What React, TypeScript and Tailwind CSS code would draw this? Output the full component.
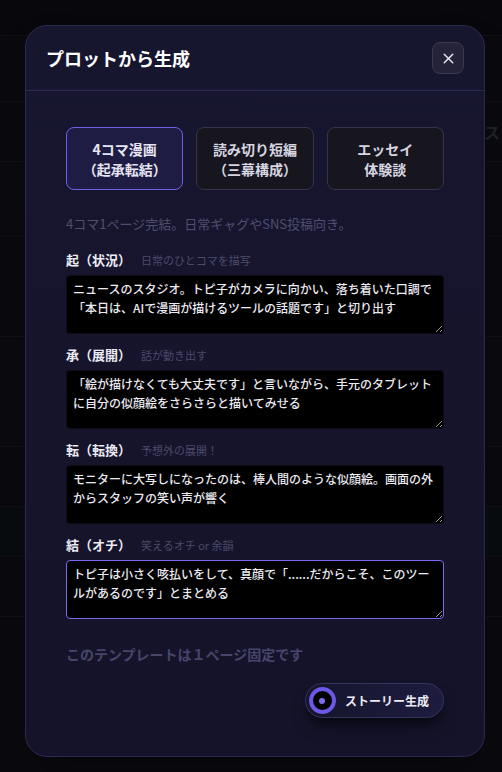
import { X } from "lucide-react";

const FONT = { fontFamily: '"Noto Sans CJK JP", "Noto Sans", sans-serif' };

const TEMPLATES = [
  { key: "4koma", lines: ["4コマ漫画", "（起承転結）"] },
  { key: "oneshot", lines: ["読み切り短編", "（三幕構成）"] },
  { key: "essay", lines: ["エッセイ", "体験談"] },
];

const BEATS = [
  {
    label: "起（状況）",
    hint: "日常のひとコマを描写",
    text: "ニュースのスタジオ。トピ子がカメラに向かい、落ち着いた口調で「本日は、AIで漫画が描けるツールの話題です」と切り出す",
  },
  {
    label: "承（展開）",
    hint: "話が動き出す",
    text: "「絵が描けなくても大丈夫です」と言いながら、手元のタブレットに自分の似顔絵をさらさらと描いてみせる",
  },
  {
    label: "転（転換）",
    hint: "予想外の展開！",
    text: "モニターに大写しになったのは、棒人間のような似顔絵。画面の外からスタッフの笑い声が響く",
  },
  {
    label: "結（オチ）",
    hint: "笑えるオチ or 余韻",
    text: "トピ子は小さく咳払いをして、真顔で「......だからこそ、このツールがあるのです」とまとめる",
  },
];

function Backdrop() {
  // dimmed app behind the modal
  return (
    <div className="flex h-full flex-col bg-[#0c0c12]">
      <div className="h-[36px] border-b border-[#15151d] bg-[#0a0a10]" />
      <div className="h-[66px] border-b border-[#13131b]" />
      <div className="flex h-[60px] items-center justify-end border-b border-[#13131b] pr-[2px]">
        <span className="text-[16px] font-bold text-[#2a2a33]">ス</span>
      </div>
      <div className="h-[75px] border-b border-[#13131b] bg-[#0d0d13]" />
      <div className="h-[100px] border-b border-[#13131b]" />
      <div className="h-[110px] border-b border-[#13131b] bg-[#0d0d13]" />
      <div className="h-[60px] border-b border-[#13131b]" />
      <div className="h-[50px] border-b border-[#13131b] bg-[#0c1012]" />
      <div className="h-[60px] border-b border-[#13131b]" />
      <div className="flex-1" />
    </div>
  );
}

function TemplateTab({ lines, active }: { lines: string[]; active: boolean }) {
  return (
    <button
      type="button"
      className={`flex h-[63px] flex-col items-center justify-center rounded-lg border text-[14px] font-bold leading-[20px] ${
        active
          ? "border-[#6f5fe6] bg-[#1e1c42] text-[#e6e4f4]"
          : "border-[#35344a] bg-[#17161f] text-[#d6d5e0]"
      }`}
    >
      {lines.map((l) => (
        <span key={l}>{l}</span>
      ))}
    </button>
  );
}

function Beat({ label, hint, text, focused }: { label: string; hint: string; text: string; focused?: boolean }) {
  return (
    <div className="flex flex-col">
      <div className="flex h-[18px] items-center gap-[10px]">
        <span className="text-[13px] font-bold text-[#ecebf5]">{label}</span>
        <span className="text-[11px] text-[#4b4a6a]">{hint}</span>
      </div>
      <textarea
        defaultValue={text}
        style={FONT}
        className={`mt-[6px] h-[59px] w-full rounded-[4px] border bg-black px-[6px] py-[3px] text-[12px] font-medium leading-[19px] text-[#ecebf3] outline-none ${
          focused ? "border-[#7a68f0]" : "border-[#0c0c14]"
        }`}
      />
    </div>
  );
}

export default function App() {
  return (
    <div className="relative h-[772px] w-full overflow-hidden" style={FONT}>
      <Backdrop />

      {/* modal */}
      <div className="absolute inset-0 bg-black/20 pl-[25px] pt-[25px]">
        <div className="flex h-[732px] w-[460px] flex-col overflow-hidden rounded-[22px] border border-[#2c2950] bg-gradient-to-b from-[#17162f] to-[#141329] shadow-2xl">
          <div className="flex h-[65px] items-center justify-between border-b border-[#2a2850] pl-[20px] pr-[20px]">
            <h2 className="text-[18px] font-bold text-white">プロットから生成</h2>
            <button
              type="button"
              className="flex h-[32px] w-[32px] items-center justify-center rounded-lg border border-[#3a3955] bg-[#24233a] text-[#e8e8f0]"
            >
              <X size={17} strokeWidth={2} />
            </button>
          </div>

          <div className="flex flex-1 flex-col px-[40px] pt-[36px]">
            <div className="grid grid-cols-3 gap-[13px]">
              {TEMPLATES.map((t, i) => (
                <TemplateTab key={t.key} lines={t.lines} active={i === 0} />
              ))}
            </div>

            <p className="mt-[23px] text-[13px] leading-[22px] text-[#4f4e70]">
              4コマ1ページ完結。日常ギャグやSNS投稿向き。
            </p>

            <div className="mt-[16px] flex flex-col gap-[12px]">
              {BEATS.map((b, i) => (
                <Beat key={b.label} {...b} focused={i === 3} />
              ))}
            </div>

            <p className="mt-[25px] text-[14px] font-bold text-[#47466a]">このテンプレートは１ページ固定です</p>

            <div className="mt-[18px] flex justify-end">
              <button
                type="button"
                className="flex h-[35px] items-center gap-[9px] rounded-full border border-[#34335a] bg-gradient-to-r from-[#16152c] to-[#1d1c40] pl-[3px] pr-[14px] shadow-lg shadow-black/50"
              >
                <span className="flex h-[27px] w-[27px] items-center justify-center rounded-full border-[4px] border-[#6a58e6] bg-black">
                  <span className="h-[6px] w-[6px] rounded-full bg-[#7d6cf0]" />
                </span>
                <span className="text-[12px] font-bold text-[#ecebf5]">ストーリー生成</span>
              </button>
            </div>
          </div>
        </div>
      </div>
    </div>
  );
}
